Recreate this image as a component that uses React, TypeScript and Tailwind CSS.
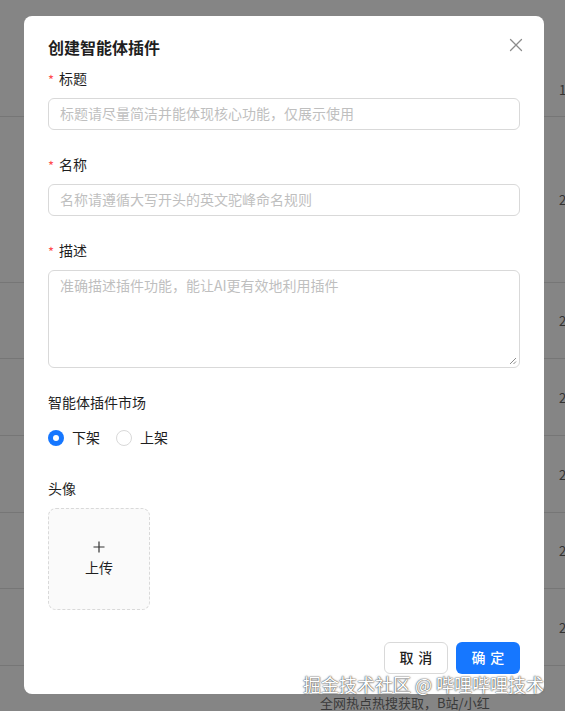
import React from "react";

const font = { fontFamily: '"Noto Sans CJK SC", "Noto Sans", sans-serif' };

function BgRow({ h, label, children }: { h: string; label?: string; children?: React.ReactNode }) {
  return (
    <div className={`${h} flex border-b border-[#767676]`}>
      <div className="flex-1 relative">{children}</div>
      <div className="w-[6px] flex items-center overflow-hidden">
        <span className="text-[13px] text-[#333] leading-none">{label}</span>
      </div>
    </div>
  );
}

function Label({ text, required }: { text: string; required?: boolean }) {
  return (
    <div className="h-[22px] flex items-center text-[14px] text-[#1f1f1f] mb-2">
      {required && <span className="text-[#ff4d4f] mr-[5px] text-[13px] leading-none relative top-0">*</span>}
      <span className="relative -top-px">{text}</span>
    </div>
  );
}

export default function App() {
  return (
    <div className="relative w-[565px] h-[711px] overflow-hidden bg-[#858585]" style={font}>
      {/* background page (dimmed) */}
      <div className="flex flex-col">
        <div className="h-[117px] flex border-b border-[#767676]">
          <div className="flex-1" />
          <div className="w-[6px] pt-[76px] overflow-hidden">
            <span className="text-[13px] text-[#333] leading-none">1</span>
          </div>
        </div>
        <BgRow h="h-[166px]" label="2" />
        <BgRow h="h-[76px]" label="2" />
        <BgRow h="h-[77px]" label="2" />
        <BgRow h="h-[77px]" label="2" />
        <BgRow h="h-[76px]" label="2" />
        <BgRow h="h-[77px]" label="2" />
        <div className="h-[60px] pl-[320px] pt-[27px] text-[13px] text-[#3a3a3a] leading-[20px]">
          全网热点热搜获取，B站/小红
        </div>
      </div>

      {/* modal */}
      <div className="absolute left-[24px] top-[16px] w-[520px] h-[678px] bg-white rounded-[8px] px-6 pt-[20px] pb-5 flex flex-col">
        <div className="flex items-center justify-between h-[24px] mb-2">
          <span className="text-[16px] font-semibold text-[#1f1f1f] relative -top-px">创建智能体插件</span>
          <svg width="14" height="14" viewBox="0 0 14 14" className="mr-[-3px] mt-[-6px]">
            <path d="M1.5 1.5 L12.5 12.5 M12.5 1.5 L1.5 12.5" stroke="#8c8c8c" strokeWidth="1.3" strokeLinecap="round" />
          </svg>
        </div>

        <Label text="标题" required />
        <div className="h-[32px] border border-[#d9d9d9] rounded-[6px] px-[11px] flex items-center text-[14px] text-[#bfbfbf] mb-6">
          <span className="relative -top-px">标题请尽量简洁并能体现核心功能，仅展示使用</span>
        </div>

        <Label text="名称" required />
        <div className="h-[32px] border border-[#d9d9d9] rounded-[6px] px-[11px] flex items-center text-[14px] text-[#bfbfbf] mb-6">
          <span className="relative -top-px">名称请遵循大写开头的英文驼峰命名规则</span>
        </div>

        <Label text="描述" required />
        <div className="relative h-[98px] border border-[#d9d9d9] rounded-[6px] px-[11px] pt-[3px] text-[14px] leading-[22px] text-[#bfbfbf] mb-6">
          准确描述插件功能，能让AI更有效地利用插件
          <svg width="8" height="8" viewBox="0 0 8 8" className="absolute right-[2px] bottom-[2px]">
            <path d="M7 1 L1 7 M7 4.5 L4.5 7" stroke="#8c8c8c" strokeWidth="1" />
          </svg>
        </div>

        <Label text="智能体插件市场" />
        <div className="h-[32px] flex items-center text-[14px] text-[#1f1f1f] mb-6">
          <div className="flex items-center mr-2">
            <div className="w-4 h-4 rounded-full bg-[#1677ff] flex items-center justify-center">
              <div className="w-[6px] h-[6px] rounded-full bg-white" />
            </div>
            <span className="px-2 relative -top-px">下架</span>
          </div>
          <div className="flex items-center">
            <div className="w-4 h-4 rounded-full border border-[#d9d9d9] bg-white" />
            <span className="px-2 relative -top-px">上架</span>
          </div>
        </div>

        <Label text="头像" />
        <div className="w-[102px] h-[102px] border border-dashed border-[#d9d9d9] rounded-[8px] bg-[#fafafa] flex flex-col items-center justify-center text-[#1f1f1f]">
          <svg width="14" height="14" viewBox="0 0 14 14" className="mb-[3px]">
            <path d="M7 1.5 V12.5 M1.5 7 H12.5" stroke="#333" strokeWidth="1.2" />
          </svg>
          <span className="text-[14px] leading-[22px] relative -top-px">上传</span>
        </div>

        <div className="mt-auto flex justify-end gap-2">
          <div className="w-[64px] h-[32px] border border-[#d9d9d9] rounded-[6px] flex items-center justify-center text-[14px] font-medium text-[#1f1f1f] bg-white">
            <span className="tracking-[0.34em] mr-[-0.34em] relative -top-px">取消</span>
          </div>
          <div className="w-[64px] h-[32px] rounded-[6px] flex items-center justify-center text-[14px] font-medium text-white bg-[#1677ff]">
            <span className="tracking-[0.34em] mr-[-0.34em] relative -top-px">确定</span>
          </div>
        </div>
      </div>

      {/* watermark */}
      <div className="absolute left-[303px] top-[671px] text-[18px] leading-[26px] text-white whitespace-nowrap [text-shadow:0_0_1px_#333,0_0_2px_#555]">
        掘金技术社区 @ 哔哩哔哩技术
      </div>
    </div>
  );
}
